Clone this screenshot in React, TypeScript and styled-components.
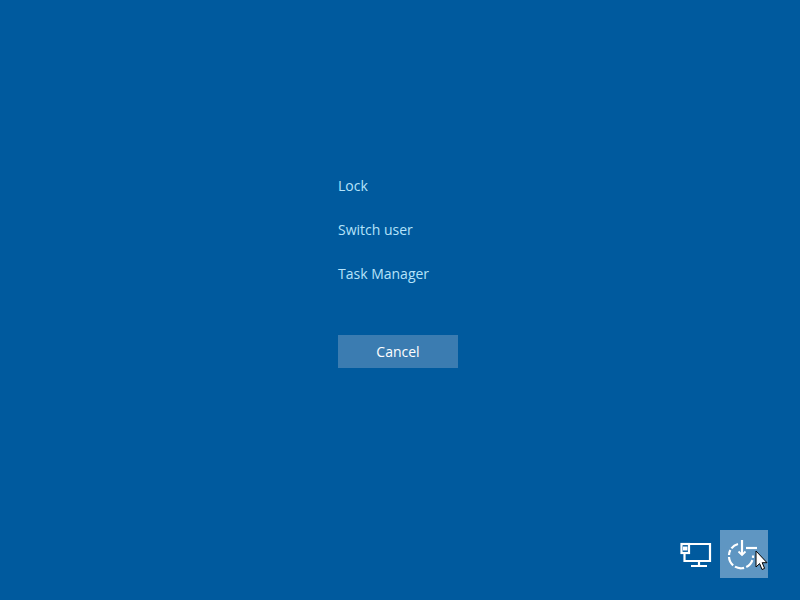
import styled, { createGlobalStyle } from "styled-components";

const GlobalStyle = createGlobalStyle`
    html, body {
        margin: 0;
        padding: 0;
        background-color: #005a9e;
    }
    * {
        box-sizing: border-box;
    }
`;

const options = ["Lock", "Switch user", "Task Manager"];

const NetworkIcon = () => (
    <svg width="32" height="28" viewBox="0 0 32 28" fill="none" stroke="#fff" strokeWidth="2.2">
        <path d="M8 4H30V21H4.5V13" />
        <rect x="1.5" y="4" width="7.5" height="9" fill="#005a9e" />
        <rect x="3" y="6.5" width="4.5" height="4" fill="#fff" stroke="none" />
        <path d="M19 21V26M11 26H27" />
    </svg>
);

const PowerIcon = () => (
    <svg width="40" height="40" viewBox="0 0 40 40" fill="none" stroke="#fff" strokeWidth="2.2">
        <path d="M14 10A12 12 0 0 0 5 21" strokeDasharray="8 2" />
        <path d="M5 23A12 12 0 0 0 29 21.5" strokeDasharray="9.5 2.2" />
        <path d="M18 6V21" />
        <path d="M14.5 17.5L18 21L21.5 17.5" strokeWidth="1.8" />
        <path d="M22 14H33" />
    </svg>
);

const PointerIcon = () => (
    <svg width="13" height="21" viewBox="0 0 13 21">
        <path d="M1 1V17L4.6 13.6L7 19.5L9.6 18.4L7.2 12.7H12Z" fill="#fff" stroke="#000" strokeWidth="1" />
    </svg>
);

export default function App() {
    return (
        <>
            <GlobalStyle />
            <Screen>
                <Menu>
                    {options.map((label) => (
                        <MenuItem key={label}>{label}</MenuItem>
                    ))}
                    <CancelButton>Cancel</CancelButton>
                </Menu>
                <Tray>
                    <TrayButton>
                        <NetworkIcon />
                    </TrayButton>
                    <TrayButton $active>
                        <PowerIcon />
                        <Pointer>
                            <PointerIcon />
                        </Pointer>
                    </TrayButton>
                </Tray>
            </Screen>
        </>
    );
}

const Screen = styled.div`
    width: 800px;
    height: 600px;
    overflow: hidden;
    display: flex;
    flex-direction: column;
    justify-content: space-between;
    background-color: #005a9e;
    font-family: "Open Sans", "Noto Sans", sans-serif;
`;

const Menu = styled.div`
    display: flex;
    flex-direction: column;
    align-items: flex-start;
    padding-top: 163px;
    padding-left: 338px;
`;

const MenuItem = styled.div`
    height: 44px;
    display: flex;
    align-items: center;
    font-size: 14px;
    color: #b5e3fa;
`;

const CancelButton = styled.button`
    width: 120px;
    height: 33px;
    margin-top: 40px;
    border: none;
    padding: 0;
    background-color: #3b7cb1;
    color: #fff;
    font-family: inherit;
    font-size: 14px;
`;

const Tray = styled.div`
    display: flex;
    justify-content: flex-end;
    padding-right: 32px;
    padding-bottom: 22px;
`;

const TrayButton = styled.div<{ $active?: boolean }>`
    position: relative;
    width: 48px;
    height: 48px;
    display: flex;
    align-items: center;
    justify-content: center;
    background-color: ${({ $active }) => ($active ? "#5f96c2" : "transparent")};
`;

const Pointer = styled.div`
    position: absolute;
    left: 35px;
    top: 20px;
    line-height: 0;
`;
